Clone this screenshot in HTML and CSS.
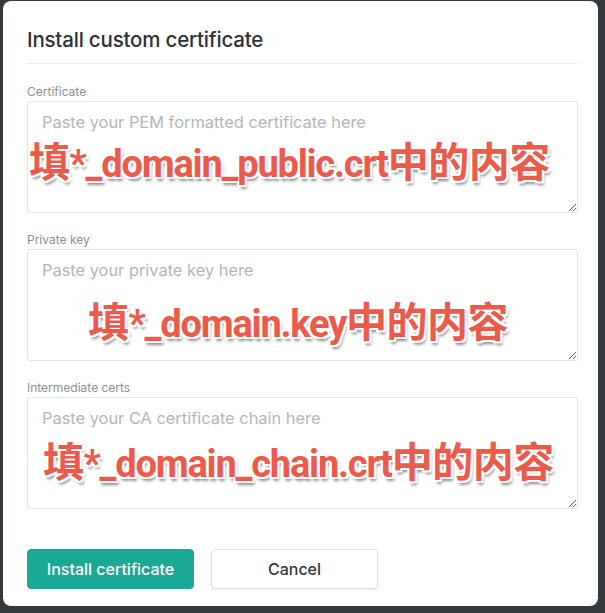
FILE: index.html
```html
<!DOCTYPE html>
<html lang="zh">
<head>
<meta charset="utf-8">
<title>Install custom certificate</title>
<link rel="stylesheet" href="styles.css">
</head>
<body>
<div class="modal">
  <h1 class="title">Install custom certificate</h1>
  <div class="field">
    <label class="label">Certificate</label>
    <div class="box">
      <textarea class="input" placeholder="Paste your PEM formatted certificate here"></textarea>
      <span class="note note-1"><span class="cjk">填</span>*_domain_public.crt<span class="cjk">中的内容</span></span>
    </div>
  </div>
  <div class="field">
    <label class="label">Private key</label>
    <div class="box">
      <textarea class="input" placeholder="Paste your private key here"></textarea>
      <span class="note note-2"><span class="cjk">填</span>*_domain.key<span class="cjk">中的内容</span></span>
    </div>
  </div>
  <div class="field">
    <label class="label">Intermediate certs</label>
    <div class="box">
      <textarea class="input" placeholder="Paste your CA certificate chain here"></textarea>
      <span class="note note-3"><span class="cjk">填</span>*_domain_chain.crt<span class="cjk">中的内容</span></span>
    </div>
  </div>
  <div class="actions">
    <button class="btn btn-primary">Install certificate</button>
    <button class="btn btn-secondary">Cancel</button>
  </div>
</div>
</body>
</html>
```

FILE: styles.css
```css
html, body {
  margin: 0;
  padding: 0;
}
body {
  background: #35393e;
  width: 605px;
  height: 613px;
  overflow: hidden;
  font-family: "Inter", "Liberation Sans", sans-serif;
}
.modal {
  box-sizing: border-box;
  margin: 1px 0 0 3px;
  width: 595px;
  height: 605px;
  background: #fff;
  border-radius: 8px;
  padding: 27px 20px 17px 24px;
  display: flex;
  flex-direction: column;
}
.title {
  margin: 0 0 21px;
  padding-bottom: 11px;
  border-bottom: 1px solid #eceeef;
  font-size: 20.5px;
  line-height: 24px;
  font-weight: 500;
  color: #2c3237;
  letter-spacing: -0.2px;
}
.field {
  display: flex;
  flex-direction: column;
  margin-bottom: 20px;
}
.label {
  font-size: 12px;
  line-height: 13px;
  color: #8a8f94;
  margin-bottom: 3px;
}
.box {
  position: relative;
}
.input {
  display: block;
  box-sizing: border-box;
  width: 551px;
  height: 112px;
  border: 1px solid #e2e4e6;
  border-radius: 3px;
  padding: 9px 14px;
  font-family: "Inter", "Liberation Sans", sans-serif;
  font-size: 16.4px;
  line-height: 22px;
  color: #333;
  resize: vertical;
  outline: none;
}
.input::placeholder {
  color: #b4b7ba;
}
.note {
  position: absolute;
  white-space: nowrap;
  font-family: "Roboto", "Liberation Sans", "Noto Sans CJK SC", sans-serif;
  font-weight: 700;
  font-size: 38px;
  line-height: 38px;
  color: #ec5a4c;
  letter-spacing: -1.2px;
  pointer-events: none;
  text-shadow:
    -2px 0 0 #fff, 2px 0 0 #fff, 0 -2px 0 #fff, 0 2px 0 #fff,
    -2px -2px 0 #fff, 2px 2px 0 #fff, -2px 2px 0 #fff, 2px -2px 0 #fff,
    2px 4px 3px rgba(0, 0, 0, 0.45);
}
.cjk {
  font-family: "Noto Sans CJK SC", sans-serif;
  font-size: 41px;
  letter-spacing: -0.5px;
}
.note-1 { left: 2px; top: 39px; }
.note-2 { left: 61px; top: 51px; }
.note-3 { left: 16px; top: 43px; }
.actions {
  margin-top: auto;
  display: flex;
  gap: 17px;
}
.btn {
  box-sizing: border-box;
  width: 167px;
  height: 40px;
  border-radius: 4px;
  font-family: "Inter", "Liberation Sans", sans-serif;
  font-size: 16px;
  font-weight: 500;
  cursor: pointer;
}
.btn-primary {
  background: #1aa996;
  border: 1px solid #1aa996;
  color: #fff;
}
.btn-secondary {
  background: #fff;
  border: 1px solid #dfe1e3;
  color: #33383c;
  box-shadow: 0 1px 2px rgba(0, 0, 0, 0.08);
}
```
